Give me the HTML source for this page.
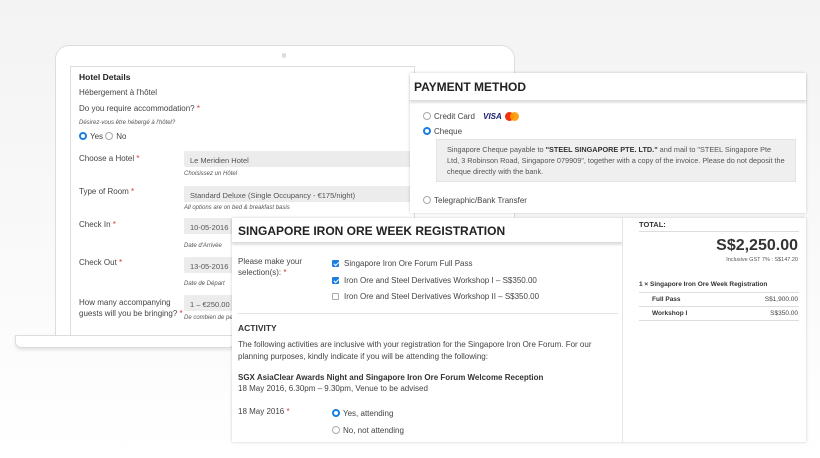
<!DOCTYPE html>
<html><head><meta charset="utf-8"><style>
*{margin:0;padding:0;box-sizing:border-box}
body{width:820px;height:458px;overflow:hidden;background:linear-gradient(#f3f3f3,#fafafa 60%,#fff);font-family:"Liberation Sans",sans-serif;color:#444;position:relative}
.a{position:absolute;white-space:nowrap}
.s{font-size:8px}
.it{font-style:italic;font-size:6px;color:#555}
.r{color:#d33}
.inp{position:absolute;background:#ececec;border-radius:2px;font-size:7.5px;padding:5px 6px;color:#555;white-space:nowrap;overflow:hidden}
.rad{display:inline-block;width:8px;height:8px;border:1px solid #aaa;border-radius:50%;vertical-align:-1px;margin-right:3px;background:#fff}
.rad.on{border:2.5px solid #1a7fe0;background:#fff}
.cb{display:inline-block;width:7px;height:7px;border:1px solid #aaa;border-radius:1px;vertical-align:-1px;margin-right:5px;background:#fff;position:relative}
.cb.on{background:#1a7fe0;border-color:#1a7fe0}
.cb.on:after{content:"";position:absolute;left:1.5px;top:0;width:2px;height:3.5px;border:solid #fff;border-width:0 1px 1px 0;transform:rotate(45deg)}
.panel{position:absolute;background:#fff;box-shadow:0 0 3px rgba(0,0,0,.2)}
h2{font-size:12px;font-weight:bold;color:#222;letter-spacing:0}
</style></head><body>
<div class="a" style="left:55px;top:45px;width:460px;height:300px;background:#fff;border:1px solid #ddd;border-radius:14px 14px 0 0"></div>
<div class="a" style="left:282px;top:53px;width:4px;height:5px;background:#ddd;border-radius:2px"></div>
<div class="a" style="left:70px;top:66px;width:345px;height:270px;background:#fff;border:1px solid #ddd"></div>
<div class="a" style="left:15px;top:335px;width:220px;height:13px;background:#fff;border:1px solid #ddd;border-radius:0 0 6px 6px;box-shadow:0 2px 3px rgba(0,0,0,.1)"></div>

<div class="a" style="left:79px;top:72px;font-size:8.5px;font-weight:bold;color:#222">Hotel Details</div>
<div class="a s" style="left:79px;top:88px">Hébergement à l'hôtel</div>
<div class="a s" style="left:79px;top:104px">Do you require accommodation? <span class="r">*</span></div>
<div class="a it" style="left:79px;top:120px">Désirez-vous être hébergé à l'hôtel?</div>
<div class="a s" style="left:79px;top:132px"><span class="rad on"></span>Yes <span class="rad"></span>No</div>
<div class="a s" style="left:79px;top:154px">Choose a Hotel <span class="r">*</span></div>
<div class="inp" style="left:184px;top:151px;width:230px;height:16px">Le Meridien Hotel</div>
<div class="a it" style="left:184px;top:171px">Choisissez un Hôtel</div>
<div class="a s" style="left:79px;top:187px">Type of Room <span class="r">*</span></div>
<div class="inp" style="left:184px;top:186px;width:230px;height:16px">Standard Deluxe (Single Occupancy - €175/night)</div>
<div class="a it" style="left:184px;top:205px">All options are on bed &amp; breakfast basis</div>
<div class="a s" style="left:79px;top:220px">Check In <span class="r">*</span></div>
<div class="inp" style="left:184px;top:218px;width:60px;height:16px">10-05-2016</div>
<div class="a it" style="left:184px;top:243px">Date d'Arrivée</div>
<div class="a s" style="left:79px;top:258px">Check Out <span class="r">*</span></div>
<div class="inp" style="left:184px;top:257px;width:60px;height:16px">13-05-2016</div>
<div class="a it" style="left:184px;top:281px">Date de Départ</div>
<div class="a s" style="left:79px;top:297px;line-height:11px">How many accompanying<br>guests will you be bringing? <span class="r">*</span></div>
<div class="inp" style="left:184px;top:295px;width:60px;height:16px">1 – €250.00</div>
<div class="a it" style="left:184px;top:315px">De combien de pe</div>

<div class="panel" style="left:410px;top:73px;width:396px;height:140px">
 <div style="height:28px;padding:7px 0 0 4px;box-shadow:0 2px 2px rgba(0,0,0,.12);border-bottom:1px solid #ddd"><h2>PAYMENT METHOD</h2></div>
 <div class="a s" style="left:13px;top:39px"><span class="rad"></span>Credit Card <b style="color:#1a1f71;font-style:italic;margin-left:6px">VISA</b><span style="display:inline-block;width:9px;height:9px;border-radius:50%;background:#e31;vertical-align:-2px;margin-left:3px"></span><span style="display:inline-block;width:9px;height:9px;border-radius:50%;background:#f90;vertical-align:-2px;margin-left:-4px;opacity:.9"></span></div>
 <div class="a s" style="left:13px;top:54px"><span class="rad on"></span>Cheque</div>
 <div class="a" style="left:26px;top:66px;width:360px;height:43px;background:#efefef;border:1px solid #e3e3e3;font-size:7.3px;line-height:11px;padding:4px 10px;white-space:normal;color:#555">Singapore Cheque payable to <b style="color:#333">"STEEL SINGAPORE PTE. LTD."</b> and mail to "STEEL Singapore Pte Ltd, 3 Robinson Road, Singapore 079909", together with a copy of the invoice. Please do not deposit the cheque directly with the bank.</div>
 <div class="a s" style="left:13px;top:123px"><span class="rad"></span>Telegraphic/Bank Transfer</div>
</div>

<div class="panel" style="left:232px;top:218px;width:574px;height:224px">
 <div style="position:absolute;left:0;top:0;width:390px;height:25px;padding:6px 0 0 6px;box-shadow:0 2px 2px rgba(0,0,0,.12);border-bottom:1px solid #ddd"><h2>SINGAPORE IRON ORE WEEK REGISTRATION</h2></div>
 <div class="a" style="left:390px;top:0;width:1px;height:224px;background:#e5e5e5"></div>
 <div class="a s" style="left:6px;top:38px;line-height:11px">Please make your<br>selection(s): <span class="r">*</span></div>
 <div class="a s" style="left:100px;top:41px"><span class="cb on"></span>Singapore Iron Ore Forum Full Pass</div>
 <div class="a s" style="left:100px;top:58px"><span class="cb on"></span>Iron Ore and Steel Derivatives Workshop I – S$350.00</div>
 <div class="a s" style="left:100px;top:74px"><span class="cb"></span>Iron Ore and Steel Derivatives Workshop II – S$350.00</div>
 <div class="a" style="left:6px;top:95px;width:380px;height:1px;background:#e3e3e3"></div>
 <div class="a" style="left:6px;top:105px;font-size:8.5px;font-weight:bold;color:#333">ACTIVITY</div>
 <div class="a s" style="left:6px;top:121px;line-height:12px">The following activities are inclusive with your registration for the Singapore Iron Ore Forum. For our<br>planning purposes, kindly indicate if you will be attending the following:</div>
 <div class="a s" style="left:6px;top:155px;font-weight:bold;color:#333">SGX AsiaClear Awards Night and Singapore Iron Ore Forum Welcome Reception</div>
 <div class="a s" style="left:6px;top:166px">18 May 2016, 6.30pm – 9.30pm, Venue to be advised</div>
 <div class="a s" style="left:6px;top:189px">18 May 2016 <span class="r">*</span></div>
 <div class="a s" style="left:100px;top:191px"><span class="rad on"></span>Yes, attending</div>
 <div class="a s" style="left:100px;top:208px"><span class="rad"></span>No, not attending</div>
 <div class="a" style="left:407px;top:2px;font-size:7.5px;font-weight:bold;color:#333">TOTAL:</div>
 <div class="a" style="left:407px;top:13px;width:160px;height:1px;background:#ddd"></div>
 <div class="a" style="right:8px;top:19px;font-size:16px;font-weight:bold;color:#333">S$2,250.00</div>
 <div class="a" style="right:8px;top:39px;font-size:5.5px;color:#555">Inclusive GST 7% : S$147.20</div>
 <div class="a" style="left:407px;top:63px;font-size:6.5px;font-weight:bold;color:#333">1 × Singapore Iron Ore Week Registration</div>
 <div class="a" style="left:407px;top:74px;width:160px;height:1px;background:#ddd"></div>
 <div class="a" style="left:420px;top:78px;font-size:6.5px;font-weight:bold;color:#333">Full Pass</div>
 <div class="a" style="right:8px;top:78px;font-size:6.5px">S$1,900.00</div>
 <div class="a" style="left:407px;top:88px;width:160px;height:1px;background:#ddd"></div>
 <div class="a" style="left:420px;top:92px;font-size:6.5px;font-weight:bold;color:#333">Workshop I</div>
 <div class="a" style="right:8px;top:92px;font-size:6.5px">S$350.00</div>
 <div class="a" style="left:407px;top:102px;width:160px;height:1px;background:#ddd"></div>
</div>
</body></html>
